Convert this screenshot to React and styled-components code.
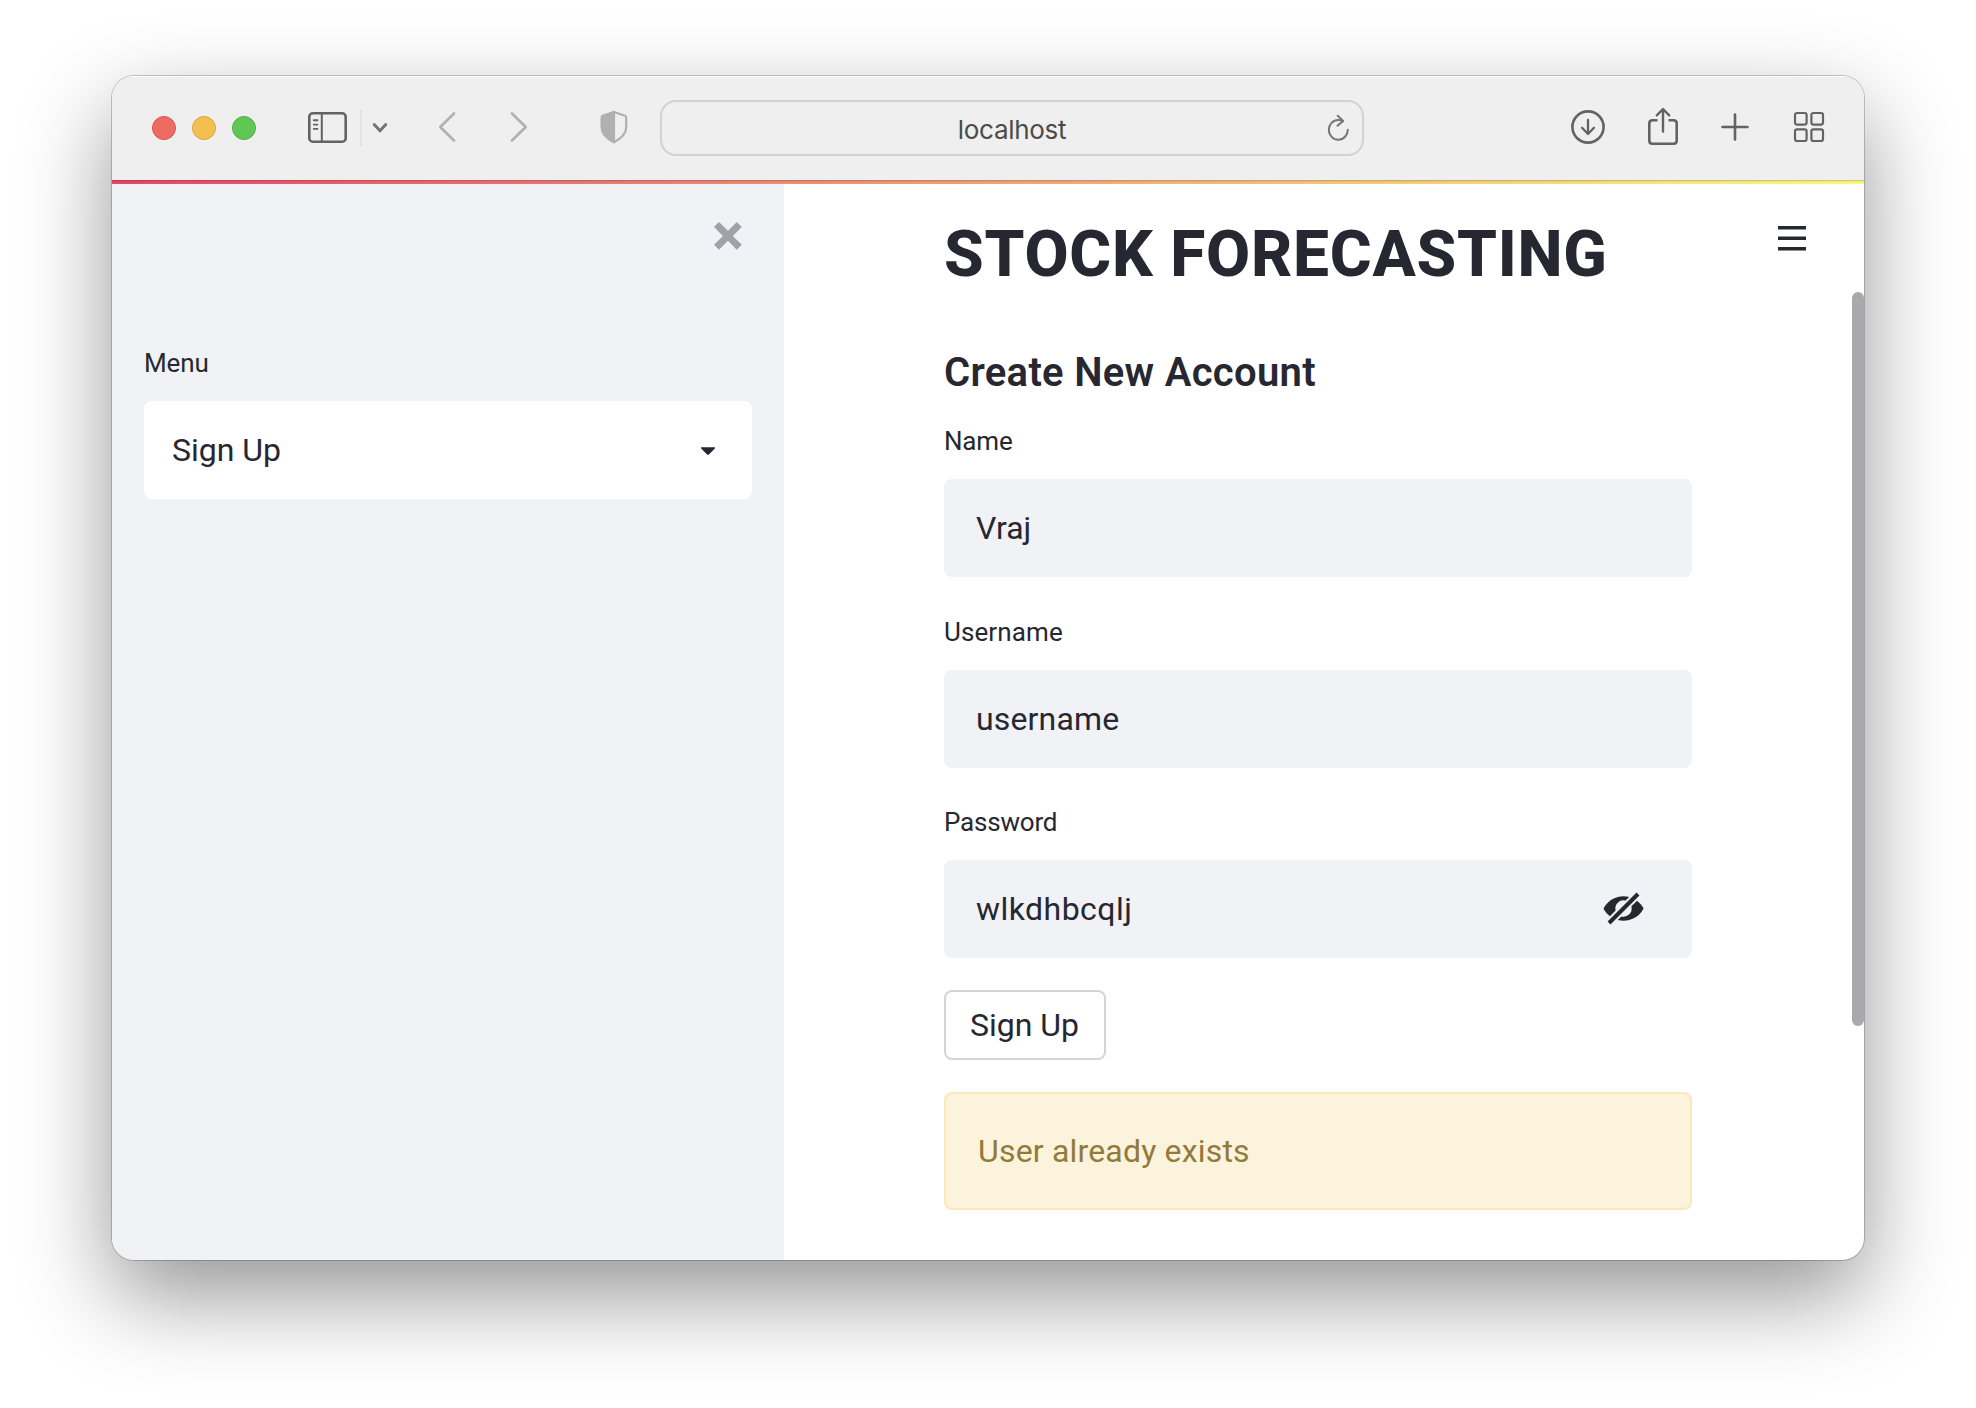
import React from "react";
import styled, { createGlobalStyle } from "styled-components";

const GlobalStyle = createGlobalStyle`
  *, *::before, *::after { box-sizing: border-box; }
  body { margin: 0; background: #fff; overflow: hidden; }
  svg { display: block; flex: none; }
`;

const ink = "#262730";

const Desktop = styled.div`
  width: 1976px;
  height: 1408px;
  padding: 76px 112px 148px;
  background: #fff;
`;

const Window = styled.div`
  display: flex;
  flex-direction: column;
  height: 1184px;
  border-radius: 22px;
  overflow: hidden;
  background: #fff;
  box-shadow: 0 0 0 1px rgba(0, 0, 0, 0.2), 0 36px 90px rgba(0, 0, 0, 0.42);
`;

const Toolbar = styled.header`
  display: flex;
  align-items: center;
  height: 104px;
  padding: 0 36px 0 40px;
  background: #efefef;
  box-shadow: inset 0 2px 1px -1px #fff;
`;

const Group = styled.div`
  display: flex;
  align-items: center;
  gap: ${(p) => p.$gap}px;
  margin-left: ${(p) => p.$before || 0}px;
  padding-bottom: ${(p) => p.$lift || 0}px;
`;

const Light = styled.span`
  width: 24px;
  height: 24px;
  border-radius: 50%;
  background: ${(p) => p.$color};
  border: 1px solid ${(p) => p.$edge};
`;

const Divider = styled.span`
  width: 2px;
  height: 36px;
  background: #e2e2e2;
`;

const AddressBar = styled.div`
  display: grid;
  grid-template-columns: 1fr auto 1fr;
  align-items: center;
  width: 704px;
  height: 56px;
  margin-left: 32px;
  padding: 0 12px;
  border: 2px solid #d2d2d2;
  border-radius: 16px;
  font: 400 26px/32px Inter, "Liberation Sans", sans-serif;
  letter-spacing: -0.3px;
  color: #4b4b4b;

  span { grid-column: 2; padding-top: 3px; }
  svg { justify-self: end; }
`;

const Decoration = styled.div`
  height: 4px;
  flex: none;
  background: linear-gradient(rgba(0, 0, 0, 0.18) 1px, rgba(0, 0, 0, 0.08) 1px, rgba(0, 0, 0, 0.01) 3px),
    linear-gradient(90deg, #ea486d, #f5ad7a 55%, #fffd80);
`;

const Page = styled.div`
  position: relative;
  display: flex;
  flex: 1;
  font-family: Roboto, "Noto Sans", sans-serif;
  color: ${ink};
`;

const Sidebar = styled.aside`
  display: flex;
  flex-direction: column;
  width: 672px;
  padding: 38px 32px 0;
  background: #f0f2f6;
`;

const SidebarTop = styled.div`
  display: flex;
  justify-content: flex-end;
  padding-right: 10px;
  margin-bottom: 93px;
  color: #a1a2a7;
`;

const Main = styled.main`
  display: flex;
  flex-direction: column;
  align-items: stretch;
  width: 1080px;
  padding: 31px 172px 0 160px;
`;

const Title = styled.h1`
  margin: 0 0 54px;
  font-size: 64px;
  font-weight: 800;
  line-height: 80px;
  white-space: nowrap;
`;

const Subtitle = styled.h3`
  margin: 0 0 24px;
  font-size: 40px;
  font-weight: 600;
  line-height: 48px;
`;

const Fields = styled.div`
  display: grid;
  gap: 34.5px;
`;

const Field = styled.label`
  display: flex;
  flex-direction: column;
  gap: 18px;
`;

const Label = styled.span`
  font-size: 26px;
  line-height: 40px;
`;

const Box = styled.div`
  display: flex;
  align-items: center;
  justify-content: space-between;
  height: 98px;
  padding: 0 ${(p) => p.$right || 32}px 0 ${(p) => p.$left || 32}px;
  border-radius: 8px;
  background: ${(p) => p.$bg || "#f0f2f6"};
  font-size: 32px;
  line-height: 48px;
`;

const Track = styled.span`
  letter-spacing: ${(p) => p.$v}px;
`;

const Button = styled.button`
  align-self: flex-start;
  width: 162px;
  height: 70px;
  margin: 32px 0;
  padding: 0 1px 0 0;
  border: 2px solid #d4d4d6;
  border-radius: 8px;
  background: #fff;
  color: ${ink};
  font: 400 32px/48px Roboto, "Noto Sans", sans-serif;
`;

const Alert = styled.div`
  display: flex;
  align-items: center;
  height: 118px;
  padding: 0 32px;
  border: 2px solid #fbe9bb;
  border-radius: 8px;
  background: #fcf3dc;
  color: #927b3a;
  font-size: 32px;
  line-height: 48px;
`;

const MenuButton = styled.div`
  position: absolute;
  top: 42px;
  right: 58px;
`;

const ScrollThumb = styled.div`
  position: absolute;
  top: 108px;
  right: 0;
  width: 12px;
  height: 734px;
  border-radius: 6px;
  background: #a8a9ad;
`;

const Stroke = ({ w, h, color = "#636363", sw = 2.6, children }) => (
  <svg width={w} height={h} viewBox={`0 0 ${w} ${h}`} fill="none" stroke={color} strokeWidth={sw} strokeLinecap="round" strokeLinejoin="round">
    {children}
  </svg>
);

const SidebarIcon = () => (
  <Stroke w={41} h={32}>
    <rect x="2.3" y="1.3" width="36.4" height="28.4" rx="3.5" />
    <path d="M14.8 1.5V29.5" strokeWidth="2" />
    <path d="M6.8 8.3H10.4M6.8 12.6H10.4M6.8 16.9H10.4" strokeWidth="1.9" />
  </Stroke>
);

const ShieldIcon = () => (
  <Stroke w={28} h={34} color="#b0b0b0" sw={2.2}>
    <path d="M14 2 25 5.8Q26.2 6.3 26.2 7.6V17.5C26.2 24 21 28.5 14 32.2 7 28.5 1.8 24 1.8 17.5V7.6Q1.8 6.3 3 5.8Z" />
    <path d="M14 2V32.2C7 28.5 1.8 24 1.8 17.5V7.6Q1.8 6.3 3 5.8Z" fill="#b0b0b0" />
  </Stroke>
);

const ReloadIcon = () => (
  <Stroke w={24} h={28} color="#777" sw={2}>
    <path d="M17 7.2C15.6 6.2 14 5.9 12.2 5.9A9.5 9.9 0 1 0 21.8 15.8" />
    <path d="M11.7 1.8 17.2 7 11.5 11.6" />
  </Stroke>
);

const EyeOff = () => (
  <svg width="41" height="43" viewBox="0 0 20 21" fill={ink}>
    <path d="M12.81 4.36l-1.77 1.78a4 4 0 00-4.9 4.9l-2.76 2.75C2.06 12.79.96 11.49.2 10a11 11 0 0112.6-5.64zm3.8 1.85c1.33 1 2.43 2.3 3.2 3.79a11 11 0 01-12.62 5.64l1.77-1.78a4 4 0 004.9-4.9l2.76-2.75zm-.25-3.99l1.42 1.42L3.64 17.78l-1.42-1.42L16.36 2.22z" />
  </svg>
);

const fields = [
  { label: "Name", value: "Vraj", labelTrack: -0.2, valueTrack: 0 },
  { label: "Username", value: "username", labelTrack: 0.1, valueTrack: 0.15 },
  { label: "Password", value: "wlkdhbcqlj", labelTrack: -0.2, valueTrack: 0.45, secret: true },
];

export default function App() {
  return (
    <>
      <GlobalStyle />
      <Desktop>
        <Window>
          <Toolbar>
            <Group $gap={16}>
              <Light $color="#ed6b60" $edge="#d9574c" />
              <Light $color="#f5bf4f" $edge="#dba63f" />
              <Light $color="#62c655" $edge="#4fae43" />
            </Group>
            <Group $gap={12} $before={51}>
              <SidebarIcon />
              <Group $gap={9}>
                <Divider />
                <Stroke w={18} h={14} color="#737373" sw={3}>
                  <path d="M3.2 3.5 9 9.8 14.8 3.5" />
                </Stroke>
              </Group>
            </Group>
            <Group $gap={52} $before={48} $lift={2}>
              <Stroke w={20} h={34} color="#b0b0b0">
                <path d="M17 3.5 3.3 17 17 30.5" />
              </Stroke>
              <Stroke w={20} h={34} color="#b0b0b0">
                <path d="M3 3.5 16.7 17 3 30.5" />
              </Stroke>
            </Group>
            <Group $before={71} $lift={2}>
              <ShieldIcon />
            </Group>
            <AddressBar>
              <span>localhost</span>
              <ReloadIcon />
            </AddressBar>
            <Group $before={206} $lift={2}>
              <Stroke w={36} h={36}>
                <circle cx="18" cy="18" r="15.6" />
                <path d="M18 11V24.5M12 18.8 18 25 24 18.8" strokeWidth="2.3" />
              </Stroke>
            </Group>
            <Group $before={41} $lift={4}>
              <Stroke w={32} h={40}>
                <path
                  d="M10.5 14.2H5.5Q2.3 14.2 2.3 17.4V34.5Q2.3 37.7 5.5 37.7H26.5Q29.7 37.7 29.7 34.5V17.4Q29.7 14.2 26.5 14.2H21.5"
                  strokeLinecap="butt"
                />
                <path d="M16 25.5V3.5M9.8 9.3 16 3 22.2 9.3" strokeWidth="2.4" />
              </Stroke>
            </Group>
            <Group $before={41} $lift={3}>
              <Stroke w={30} h={30}>
                <path d="M15 2.5V27.5M2.5 15H27.5" />
              </Stroke>
            </Group>
            <Group $before={43} $lift={2}>
              <Stroke w={32} h={32} sw={2.2}>
                <rect x="2" y="2" width="11.6" height="11.6" rx="2" />
                <rect x="18.4" y="2" width="11.6" height="11.6" rx="2" />
                <rect x="2" y="18.4" width="11.6" height="11.6" rx="2" />
                <rect x="18.4" y="18.4" width="11.6" height="11.6" rx="2" />
              </Stroke>
            </Group>
          </Toolbar>
          <Decoration />
          <Page>
            <Sidebar>
              <SidebarTop>
                <svg width="28" height="28" viewBox="0 0 7.9 7.9" fill="currentColor">
                  <path d="M1.41 0l-1.41 1.41.72.72 1.78 1.81-1.78 1.78-.72.69 1.41 1.44.72-.72 1.81-1.81 1.78 1.81.69.72 1.44-1.44-.72-.69-1.81-1.78 1.81-1.81.72-.72-1.44-1.41-.69.72-1.78 1.78-1.81-1.78-.72-.72z" />
                </svg>
              </SidebarTop>
              <Field as="div">
                <Label><Track $v={-0.1}>Menu</Track></Label>
                <Box $bg="#fff" $left={28} $right={28}>
                  <Track $v={0}>Sign Up</Track>
                  <svg width="32" height="32" viewBox="0 0 24 24" fill={ink}>
                    <path d="M12.7071 15.2929L17.1464 10.8536C17.4614 10.5386 17.2383 10 16.7929 10L7.20711 10C6.76165 10 6.53857 10.5386 6.85355 10.8536L11.2929 15.2929C11.6834 15.6834 12.3166 15.6834 12.7071 15.2929Z" />
                  </svg>
                </Box>
              </Field>
            </Sidebar>
            <Main>
              <Title><Track $v={0.75}>STOCK FORECASTING</Track></Title>
              <Subtitle><Track $v={0.3}>Create New Account</Track></Subtitle>
              <Fields>
                {fields.map((f) => (
                  <Field key={f.label}>
                    <Label><Track $v={f.labelTrack}>{f.label}</Track></Label>
                    <Box $right={48}>
                      <Track $v={f.valueTrack}>{f.value}</Track>
                      {f.secret && <EyeOff />}
                    </Box>
                  </Field>
                ))}
              </Fields>
              <Button>Sign Up</Button>
              <Alert><Track $v={0.18}>User already exists</Track></Alert>
            </Main>
            <MenuButton>
              <svg width="28" height="28" viewBox="0 0 8 8" fill={ink}>
                <path d="M0 0v1h8v-1h-8zm0 2.97v1h8v-1h-8zm0 3v1h8v-1h-8z" />
              </svg>
            </MenuButton>
            <ScrollThumb />
          </Page>
        </Window>
      </Desktop>
    </>
  );
}
